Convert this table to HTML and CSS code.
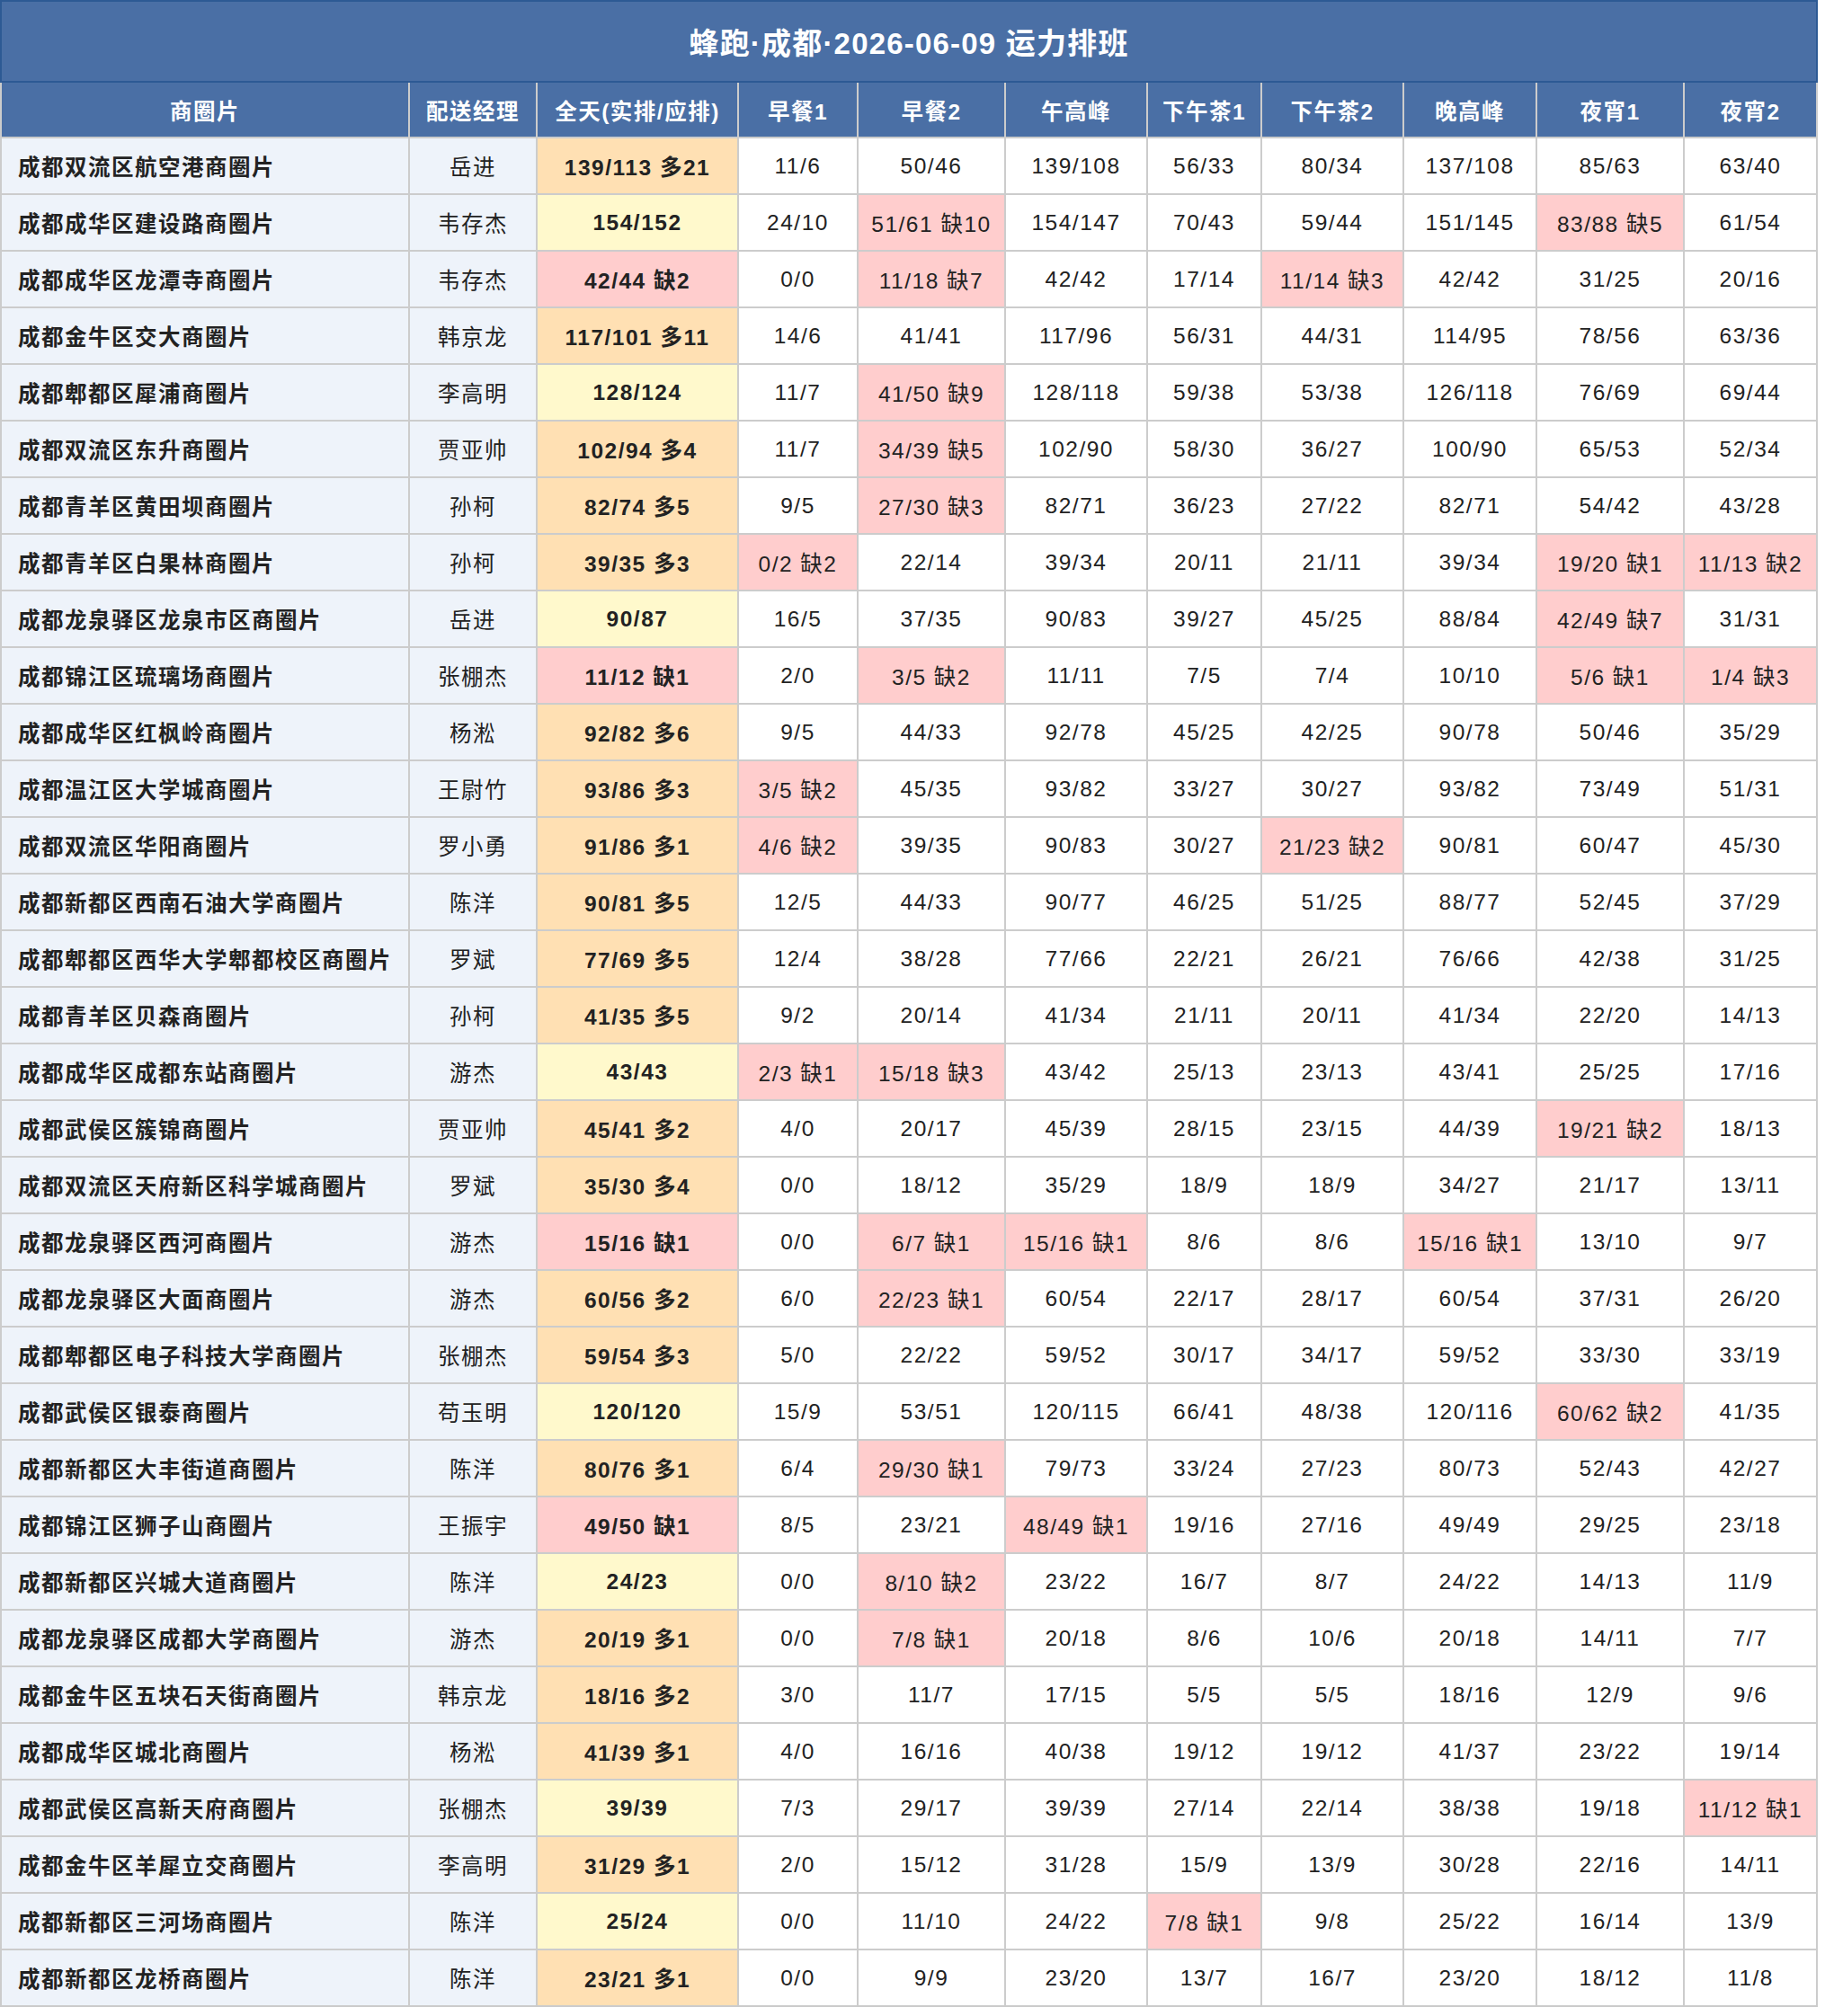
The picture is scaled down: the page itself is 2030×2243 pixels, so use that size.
FILE: index.html
```html
<!DOCTYPE html>
<html lang="zh-CN">
<head>
<meta charset="utf-8">
<title>蜂跑·成都·2026-06-09 运力排班</title>
<link rel="stylesheet" href="styles.css">
</head>
<body>
<table class="roster">
<colgroup>
<col class="c-area"><col class="c-mgr"><col class="c-day"><col class="c-b1"><col class="c-b2"><col class="c-lunch"><col class="c-t1"><col class="c-t2"><col class="c-dinner"><col class="c-n1"><col class="c-n2">
</colgroup>
<thead>
<tr><th class="title" colspan="11">蜂跑·成都·2026-06-09 运力排班</th></tr>
<tr class="head"><th>商圈片</th><th>配送经理</th><th>全天(实排/应排)</th><th>早餐1</th><th>早餐2</th><th>午高峰</th><th>下午茶1</th><th>下午茶2</th><th>晚高峰</th><th>夜宵1</th><th>夜宵2</th></tr>
</thead>
<tbody>
<tr><td class="area">成都双流区航空港商圈片</td><td class="mgr">岳进</td><td class="day more">139/113 多21</td><td>11/6</td><td>50/46</td><td>139/108</td><td>56/33</td><td>80/34</td><td>137/108</td><td>85/63</td><td>63/40</td></tr>
<tr><td class="area">成都成华区建设路商圈片</td><td class="mgr">韦存杰</td><td class="day even">154/152</td><td>24/10</td><td class="short">51/61 缺10</td><td>154/147</td><td>70/43</td><td>59/44</td><td>151/145</td><td class="short">83/88 缺5</td><td>61/54</td></tr>
<tr><td class="area">成都成华区龙潭寺商圈片</td><td class="mgr">韦存杰</td><td class="day short">42/44 缺2</td><td>0/0</td><td class="short">11/18 缺7</td><td>42/42</td><td>17/14</td><td class="short">11/14 缺3</td><td>42/42</td><td>31/25</td><td>20/16</td></tr>
<tr><td class="area">成都金牛区交大商圈片</td><td class="mgr">韩京龙</td><td class="day more">117/101 多11</td><td>14/6</td><td>41/41</td><td>117/96</td><td>56/31</td><td>44/31</td><td>114/95</td><td>78/56</td><td>63/36</td></tr>
<tr><td class="area">成都郫都区犀浦商圈片</td><td class="mgr">李高明</td><td class="day even">128/124</td><td>11/7</td><td class="short">41/50 缺9</td><td>128/118</td><td>59/38</td><td>53/38</td><td>126/118</td><td>76/69</td><td>69/44</td></tr>
<tr><td class="area">成都双流区东升商圈片</td><td class="mgr">贾亚帅</td><td class="day more">102/94 多4</td><td>11/7</td><td class="short">34/39 缺5</td><td>102/90</td><td>58/30</td><td>36/27</td><td>100/90</td><td>65/53</td><td>52/34</td></tr>
<tr><td class="area">成都青羊区黄田坝商圈片</td><td class="mgr">孙柯</td><td class="day more">82/74 多5</td><td>9/5</td><td class="short">27/30 缺3</td><td>82/71</td><td>36/23</td><td>27/22</td><td>82/71</td><td>54/42</td><td>43/28</td></tr>
<tr><td class="area">成都青羊区白果林商圈片</td><td class="mgr">孙柯</td><td class="day more">39/35 多3</td><td class="short">0/2 缺2</td><td>22/14</td><td>39/34</td><td>20/11</td><td>21/11</td><td>39/34</td><td class="short">19/20 缺1</td><td class="short">11/13 缺2</td></tr>
<tr><td class="area">成都龙泉驿区龙泉市区商圈片</td><td class="mgr">岳进</td><td class="day even">90/87</td><td>16/5</td><td>37/35</td><td>90/83</td><td>39/27</td><td>45/25</td><td>88/84</td><td class="short">42/49 缺7</td><td>31/31</td></tr>
<tr><td class="area">成都锦江区琉璃场商圈片</td><td class="mgr">张棚杰</td><td class="day short">11/12 缺1</td><td>2/0</td><td class="short">3/5 缺2</td><td>11/11</td><td>7/5</td><td>7/4</td><td>10/10</td><td class="short">5/6 缺1</td><td class="short">1/4 缺3</td></tr>
<tr><td class="area">成都成华区红枫岭商圈片</td><td class="mgr">杨淞</td><td class="day more">92/82 多6</td><td>9/5</td><td>44/33</td><td>92/78</td><td>45/25</td><td>42/25</td><td>90/78</td><td>50/46</td><td>35/29</td></tr>
<tr><td class="area">成都温江区大学城商圈片</td><td class="mgr">王尉竹</td><td class="day more">93/86 多3</td><td class="short">3/5 缺2</td><td>45/35</td><td>93/82</td><td>33/27</td><td>30/27</td><td>93/82</td><td>73/49</td><td>51/31</td></tr>
<tr><td class="area">成都双流区华阳商圈片</td><td class="mgr">罗小勇</td><td class="day more">91/86 多1</td><td class="short">4/6 缺2</td><td>39/35</td><td>90/83</td><td>30/27</td><td class="short">21/23 缺2</td><td>90/81</td><td>60/47</td><td>45/30</td></tr>
<tr><td class="area">成都新都区西南石油大学商圈片</td><td class="mgr">陈洋</td><td class="day more">90/81 多5</td><td>12/5</td><td>44/33</td><td>90/77</td><td>46/25</td><td>51/25</td><td>88/77</td><td>52/45</td><td>37/29</td></tr>
<tr><td class="area">成都郫都区西华大学郫都校区商圈片</td><td class="mgr">罗斌</td><td class="day more">77/69 多5</td><td>12/4</td><td>38/28</td><td>77/66</td><td>22/21</td><td>26/21</td><td>76/66</td><td>42/38</td><td>31/25</td></tr>
<tr><td class="area">成都青羊区贝森商圈片</td><td class="mgr">孙柯</td><td class="day more">41/35 多5</td><td>9/2</td><td>20/14</td><td>41/34</td><td>21/11</td><td>20/11</td><td>41/34</td><td>22/20</td><td>14/13</td></tr>
<tr><td class="area">成都成华区成都东站商圈片</td><td class="mgr">游杰</td><td class="day even">43/43</td><td class="short">2/3 缺1</td><td class="short">15/18 缺3</td><td>43/42</td><td>25/13</td><td>23/13</td><td>43/41</td><td>25/25</td><td>17/16</td></tr>
<tr><td class="area">成都武侯区簇锦商圈片</td><td class="mgr">贾亚帅</td><td class="day more">45/41 多2</td><td>4/0</td><td>20/17</td><td>45/39</td><td>28/15</td><td>23/15</td><td>44/39</td><td class="short">19/21 缺2</td><td>18/13</td></tr>
<tr><td class="area">成都双流区天府新区科学城商圈片</td><td class="mgr">罗斌</td><td class="day more">35/30 多4</td><td>0/0</td><td>18/12</td><td>35/29</td><td>18/9</td><td>18/9</td><td>34/27</td><td>21/17</td><td>13/11</td></tr>
<tr><td class="area">成都龙泉驿区西河商圈片</td><td class="mgr">游杰</td><td class="day short">15/16 缺1</td><td>0/0</td><td class="short">6/7 缺1</td><td class="short">15/16 缺1</td><td>8/6</td><td>8/6</td><td class="short">15/16 缺1</td><td>13/10</td><td>9/7</td></tr>
<tr><td class="area">成都龙泉驿区大面商圈片</td><td class="mgr">游杰</td><td class="day more">60/56 多2</td><td>6/0</td><td class="short">22/23 缺1</td><td>60/54</td><td>22/17</td><td>28/17</td><td>60/54</td><td>37/31</td><td>26/20</td></tr>
<tr><td class="area">成都郫都区电子科技大学商圈片</td><td class="mgr">张棚杰</td><td class="day more">59/54 多3</td><td>5/0</td><td>22/22</td><td>59/52</td><td>30/17</td><td>34/17</td><td>59/52</td><td>33/30</td><td>33/19</td></tr>
<tr><td class="area">成都武侯区银泰商圈片</td><td class="mgr">苟玉明</td><td class="day even">120/120</td><td>15/9</td><td>53/51</td><td>120/115</td><td>66/41</td><td>48/38</td><td>120/116</td><td class="short">60/62 缺2</td><td>41/35</td></tr>
<tr><td class="area">成都新都区大丰街道商圈片</td><td class="mgr">陈洋</td><td class="day more">80/76 多1</td><td>6/4</td><td class="short">29/30 缺1</td><td>79/73</td><td>33/24</td><td>27/23</td><td>80/73</td><td>52/43</td><td>42/27</td></tr>
<tr><td class="area">成都锦江区狮子山商圈片</td><td class="mgr">王振宇</td><td class="day short">49/50 缺1</td><td>8/5</td><td>23/21</td><td class="short">48/49 缺1</td><td>19/16</td><td>27/16</td><td>49/49</td><td>29/25</td><td>23/18</td></tr>
<tr><td class="area">成都新都区兴城大道商圈片</td><td class="mgr">陈洋</td><td class="day even">24/23</td><td>0/0</td><td class="short">8/10 缺2</td><td>23/22</td><td>16/7</td><td>8/7</td><td>24/22</td><td>14/13</td><td>11/9</td></tr>
<tr><td class="area">成都龙泉驿区成都大学商圈片</td><td class="mgr">游杰</td><td class="day more">20/19 多1</td><td>0/0</td><td class="short">7/8 缺1</td><td>20/18</td><td>8/6</td><td>10/6</td><td>20/18</td><td>14/11</td><td>7/7</td></tr>
<tr><td class="area">成都金牛区五块石天街商圈片</td><td class="mgr">韩京龙</td><td class="day more">18/16 多2</td><td>3/0</td><td>11/7</td><td>17/15</td><td>5/5</td><td>5/5</td><td>18/16</td><td>12/9</td><td>9/6</td></tr>
<tr><td class="area">成都成华区城北商圈片</td><td class="mgr">杨淞</td><td class="day more">41/39 多1</td><td>4/0</td><td>16/16</td><td>40/38</td><td>19/12</td><td>19/12</td><td>41/37</td><td>23/22</td><td>19/14</td></tr>
<tr><td class="area">成都武侯区高新天府商圈片</td><td class="mgr">张棚杰</td><td class="day even">39/39</td><td>7/3</td><td>29/17</td><td>39/39</td><td>27/14</td><td>22/14</td><td>38/38</td><td>19/18</td><td class="short">11/12 缺1</td></tr>
<tr><td class="area">成都金牛区羊犀立交商圈片</td><td class="mgr">李高明</td><td class="day more">31/29 多1</td><td>2/0</td><td>15/12</td><td>31/28</td><td>15/9</td><td>13/9</td><td>30/28</td><td>22/16</td><td>14/11</td></tr>
<tr><td class="area">成都新都区三河场商圈片</td><td class="mgr">陈洋</td><td class="day even">25/24</td><td>0/0</td><td>11/10</td><td>24/22</td><td class="short">7/8 缺1</td><td>9/8</td><td>25/22</td><td>16/14</td><td>13/9</td></tr>
<tr><td class="area">成都新都区龙桥商圈片</td><td class="mgr">陈洋</td><td class="day more">23/21 多1</td><td>0/0</td><td>9/9</td><td>23/20</td><td>13/7</td><td>16/7</td><td>23/20</td><td>18/12</td><td>11/8</td></tr>
</tbody>
</table>
</body>
</html>
```

FILE: styles.css
```css
html, body {
  margin: 0;
  padding: 0;
  background: #ffffff;
}

body {
  font-family: "Liberation Sans", "Noto Sans CJK SC", sans-serif;
  color: #222222;
}

.roster {
  width: 2022px;
  table-layout: fixed;
  border-collapse: separate;
  border-spacing: 0;
  font-size: 24.5px;
  letter-spacing: 1.5px;
}

.c-area { width: 456px; }
.c-mgr { width: 142px; }
.c-day { width: 224px; }
.c-b1 { width: 133px; }
.c-b2 { width: 164px; }
.c-lunch { width: 158px; }
.c-t1 { width: 127px; }
.c-t2 { width: 158px; }
.c-dinner { width: 148px; }
.c-n1 { width: 164px; }
.c-n2 { width: 148px; }

.roster th,
.roster td {
  box-sizing: border-box;
  padding: 0;
  text-align: center;
  vertical-align: middle;
  white-space: nowrap;
  border-right: 2px solid #cccccc;
  border-bottom: 2px solid #cccccc;
}

.roster th:first-child,
.roster td:first-child {
  border-left: 2px solid #cccccc;
}

.roster th.title {
  height: 92px;
  background: #4a6fa5;
  color: #ffffff;
  font-size: 33px;
  font-weight: 700;
  letter-spacing: 1.2px;
  border: 2px solid #2d5a94;
}

.head th {
  height: 62px;
  background: #4a6fa5;
  color: #ffffff;
  font-weight: 700;
}

.roster td {
  height: 63px;
  background: #ffffff;
}

.roster td.area {
  text-align: left;
  padding-left: 18px;
  background: #eef3fa;
  font-weight: 700;
}

.roster td.mgr {
  background: #eef3fa;
}

.roster td.day {
  font-weight: 700;
}

.roster td.more {
  background: #ffe0b3;
}

.roster td.even {
  background: #fff9cc;
}

.roster td.short {
  background: #ffcdcd;
}
```
